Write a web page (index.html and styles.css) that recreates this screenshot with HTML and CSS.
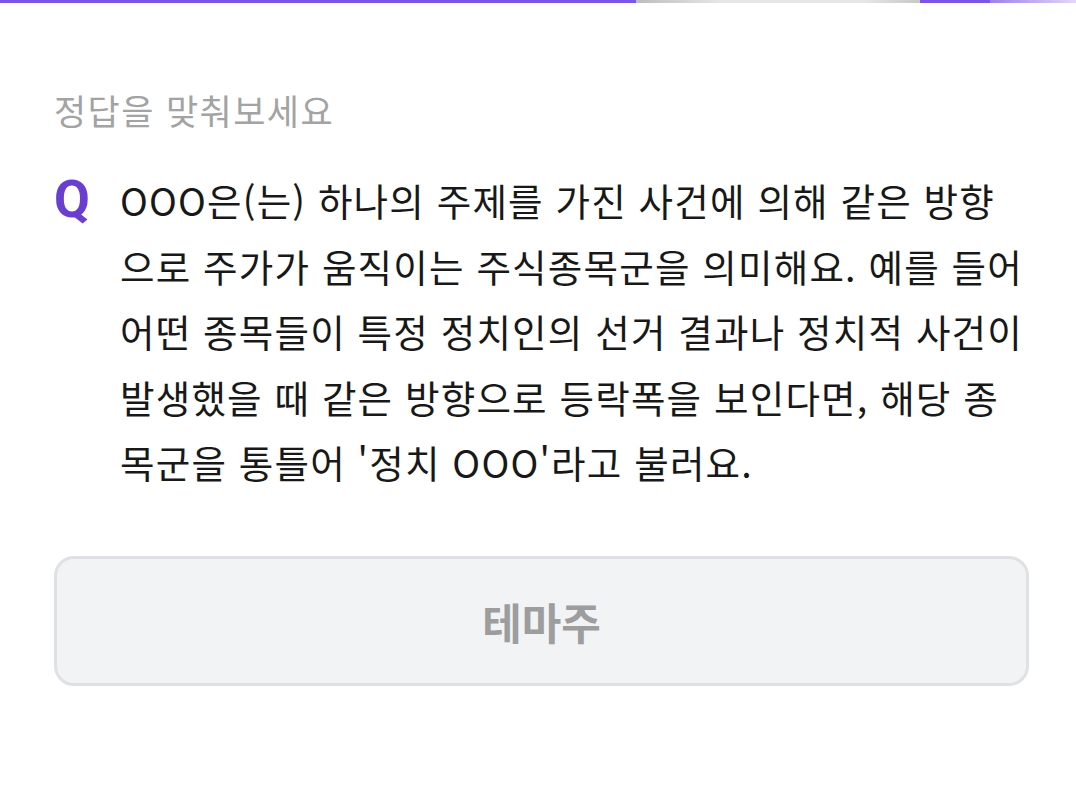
FILE: index.html
```html
<!DOCTYPE html>
<html lang="ko">
<head>
  <meta charset="utf-8">
  <meta name="viewport" content="width=device-width, initial-scale=1">
  <title>퀴즈</title>
  <link rel="stylesheet" href="styles.css">
</head>
<body>
  <div class="progress">
    <span class="bar done"></span>
    <span class="bar gap"></span>
    <span class="bar done short"></span>
    <span class="bar fade"></span>
  </div>

  <main class="quiz">
    <p class="hint">정답을 맞춰보세요</p>

    <div class="question">
      <span class="q-mark">Q</span>
      <p class="q-text">OOO은(는) 하나의 주제를 가진 사건에 의해 같은 방향으로 주가가 움직이는 주식종목군을 의미해요. 예를 들어 어떤 종목들이 특정 정치인의 선거 결과나 정치적 사건이 발생했을 때 같은 방향으로 등락폭을 보인다면, 해당 종목군을 통틀어 '정치 OOO'라고 불러요.</p>
    </div>

    <button class="answer" type="button">테마주</button>
  </main>
</body>
</html>
```

FILE: styles.css
```css
html, body {margin: 0; padding: 0; background: #fff;}
body {font-family: "Noto Sans CJK KR", "Noto Sans", sans-serif; color: #222;}

.progress {display: flex; height: 3px;}
.bar {display: block; height: 3px;}
.bar.done {width: 636px; background: #7b55e8;}
.bar.gap {width: 284px; background: linear-gradient(90deg, #bdbdbd, #e6e6e6 30%, #e6e6e6 80%, #c8c8c8);}
.bar.short {width: 70px;}
.bar.fade {flex: 1; background: linear-gradient(90deg, #9d80ee, #c7b4f4 60%, #e2d8fa);}

.quiz {padding: 0 47px 0 54px;}

.hint {margin: 84px 0 0; font-size: 35px; line-height: 46px; letter-spacing: 1.4px; color: #a3a3a3;}

.question {display: flex; gap: 30px; margin-top: 34px;}
.q-mark {flex: none; width: 36px; font-family: Roboto, "Noto Sans", sans-serif; font-weight: 700; font-size: 52px; line-height: 65px; color: #6a3fcf;}
.q-text {margin: 0; width: 910px; font-size: 37.5px; line-height: 65.5px; letter-spacing: 1.2px; word-break: break-all; color: #181818;}

.answer {display: block; width: 975px; height: 130px; margin-top: 61px; background: #f2f3f5; border: 3px solid #e0e1e4; border-radius: 20px; font-family: "Noto Sans CJK KR", sans-serif; font-size: 43px; font-weight: 700; color: #9d9d9d; padding: 0;}
```
